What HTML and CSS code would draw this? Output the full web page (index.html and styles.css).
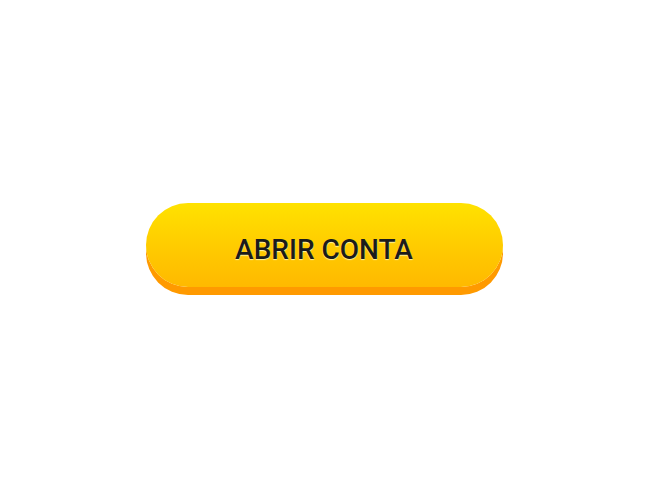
FILE: index.html
```html
<!DOCTYPE html>
<html lang="pt">
<head>
<meta charset="utf-8">
<link rel="stylesheet" href="styles.css">
</head>
<body>
<main class="stage">
  <button class="cta" type="button">ABRIR CONTA</button>
</main>
</body>
</html>
```

FILE: styles.css
```css
html, body {
  margin: 0;
  padding: 0;
  background: #ffffff;
}
.stage {
  height: 500px;
  display: flex;
  align-items: center;
  justify-content: center;
}
.cta {
  width: 357px;
  height: 84px;
  margin-bottom: 10px;
  border: none;
  border-radius: 42px;
  background: linear-gradient(to bottom, #ffe200 0%, #ffc800 60%, #ffb900 100%);
  box-shadow: 0 8px 0 #ff9a00;
  font-family: Roboto, "Liberation Sans", sans-serif;
  font-weight: 500;
  font-size: 28px;
  color: #1b1b1b;
  text-shadow: 0 1px 1px rgba(255, 255, 200, 0.8);
  letter-spacing: 0;
  cursor: pointer;
  padding: 9px 0 0 0;
}
```
